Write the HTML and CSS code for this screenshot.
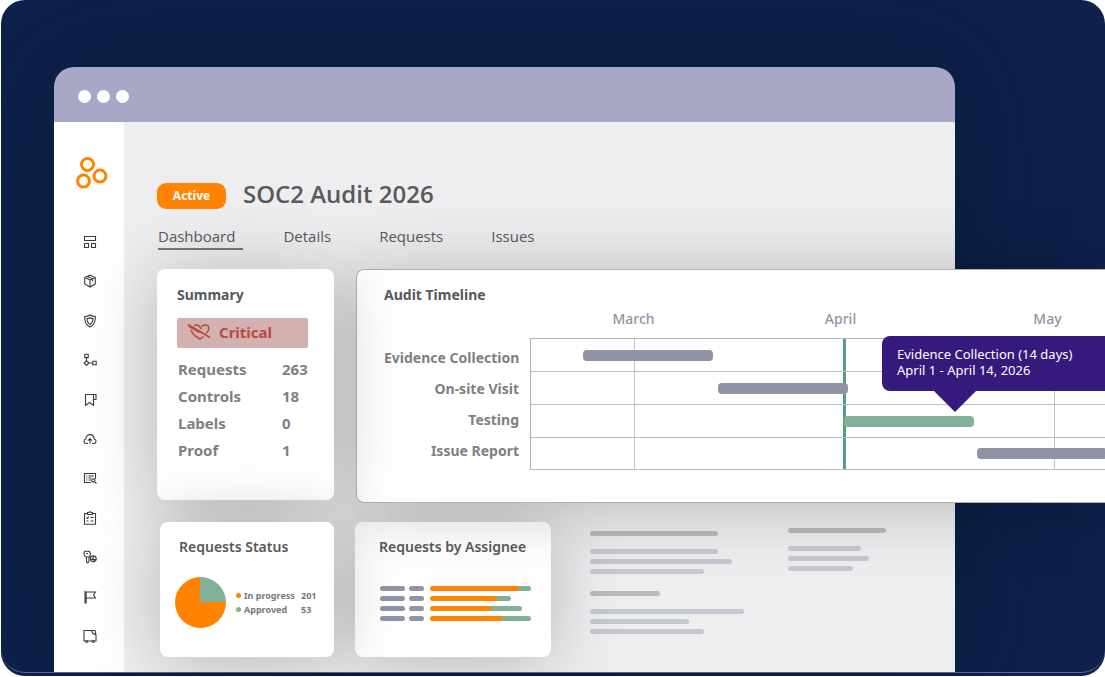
FILE: index.html
```html
<!DOCTYPE html>
<html lang="en">
<head>
    <meta charset="utf-8">
    <title>SOC2 Audit 2026</title>
    <link rel="stylesheet" href="styles.css">
</head>
<body>
    <div class="stage">
        <div class="window">
            <div class="titlebar">
                <span class="dot"></span>
                <span class="dot"></span>
                <span class="dot"></span>
            </div>

            <div class="app">
                <aside class="sidebar">
                    <svg class="logo" viewBox="0 0 32 34" aria-hidden="true">
                        <circle cx="11.5" cy="8.5" r="6"/>
                        <circle cx="24" cy="20" r="6"/>
                        <circle cx="7.5" cy="25" r="6"/>
                    </svg>
                    <nav class="menu">
                        <a href="#" aria-label="Overview"><svg viewBox="0 0 14 14"><path d="M1.5 1.5h11v4h-11zM1.5 8.5h4v4h-4zM8.500 8.500h4v4h-4z"/></svg></a>
                        <a href="#" aria-label="Packages"><svg viewBox="0 0 14 14"><path d="M7 1.200l5.300 2.300v6.500L7 13 1.700 10V3.500zM1.700 3.500L7 6l5.300-2.500M7 6v7M4.300 2.400l5.200 2.400v2.400"/></svg></a>
                        <a href="#" aria-label="Security"><svg viewBox="0 0 14 14"><path d="M7 1c1.800 1.200 3.500 1.500 5.300 1.500.3 4.800-.8 8.500-5.300 10.500C2.500 11 1.400 7.300 1.700 2.500 3.500 2.500 5.200 2.200 7 1z"/><path d="M7 3.700c1 .7 2 .9 3 .9 0 2.600-.7 4.600-3 5.800-2.300-1.200-3-3.200-3-5.800 1 0 2-.2 3-.9z"/></svg></a>
                        <a href="#" aria-label="Workflow"><svg viewBox="0 0 14 14"><path d="M1.800 1.200h3.400v3.400H1.800zM9.800 8.300h3.400v3.400H9.800zM3.500 7.600L5.900 10l-2.400 2.400L1.100 10zM3.500 4.600v3M5.900 10h3.900"/></svg></a>
                        <a href="#" aria-label="Bookmarks"><svg viewBox="0 0 14 14"><path d="M2.500 12.500v-11h8v11l-4-3zM8.500 1.500h4.500v5h-2.500"/></svg></a>
                        <a href="#" aria-label="Uploads"><svg viewBox="0 0 14 14"><path d="M5 11.500H3.300C.3 11.300.2 7.500 2.900 7 2.700 1.400 10.900.900 11.100 7c2.700.5 2.600 4.300-.4 4.500H9M7 11.500V6.800M4.900 8.700L7 6.600l2.100 2.100"/></svg></a>
                        <a href="#" aria-label="Search list"><svg viewBox="0 0 14 14"><path d="M8 11.500H1.500v-9h11V8M3.300 5h1M5.500 5H11M3.300 7h1M5.500 7h3M3.300 9h1M5.500 9H8"/><circle cx="10.300" cy="9.500" r="1.600"/><path d="M11.500 10.700l2 2"/></svg></a>
                        <a href="#" aria-label="Checklist"><svg viewBox="0 0 14 14"><path d="M4.500 2.500h-3v10.800h11V2.500h-3M4.500 1.500h1.300L7 .7l1.200.8h1.300v2h-5zM3.500 6.500l1 1 1.500-2M7.500 6.500h3M3.500 10h2M7.500 10h3"/></svg></a>
                        <a href="#" aria-label="Users and keys"><svg viewBox="0 0 14 14"><path d="M1.500 1.200h5l1 2.500-1 3.300h-4L.8 4zM3 3.500h2M3.500 7v5l1.300 1 1.200-1.500V7"/><circle cx="10.300" cy="8.800" r="2.900"/><path d="M7.500 9.500h5.700M10.300 6v2.500M9.200 8.300l2.300 2.600"/></svg></a>
                        <a href="#" aria-label="Flags"><svg viewBox="0 0 14 14"><path d="M2 .8v12.700M3.200 2.200v11.300M3 2h9.500l-2 3 2 3H3"/></svg></a>
                        <a href="#" aria-label="Vendors"><svg viewBox="0 0 14 14"><path d="M2.500 12H1V1.500h11L13 6v6h-1.500M5 12h4M8.500 1.500l1 2.500 3.500 2"/><circle cx="3.700" cy="12.300" r="1.100"/><circle cx="10.300" cy="12.300" r="1.100"/></svg></a>
                    </nav>
                </aside>

                <main class="main">
                    <header class="heading">
                        <span class="badge">Active</span>
                        <h1>SOC2 Audit 2026</h1>
                    </header>

                    <nav class="tabs">
                        <a href="#" class="active">Dashboard</a>
                        <a href="#">Details</a>
                        <a href="#">Requests</a>
                        <a href="#">Issues</a>
                    </nav>

                    <div class="row top-row">
                        <section class="card summary">
                            <h2>Summary</h2>
                            <div class="critical">
                                <svg viewBox="0 0 24 18" aria-hidden="true">
                                    <path d="M7 2.500c2.500-1.200 4.500-.5 6 1.500l1.500 2M14.500 3.500c2-2 5.500-2.200 6.700-.3 1.400 2.500.3 5-2.200 7.300M4 7c1 3.200 4.500 6.500 9 9.200l3.500-2.700M1 1.500l22 13M1.500 3.200l11 6.500"/>
                                </svg>
                                <span>Critical</span>
                            </div>
                            <table class="stats">
                                <tr><th scope="row">Requests</th><td>263</td></tr>
                                <tr><th scope="row">Controls</th><td>18</td></tr>
                                <tr><th scope="row">Labels</th><td>0</td></tr>
                                <tr><th scope="row">Proof</th><td>1</td></tr>
                            </table>
                        </section>

                        <section class="card timeline">
                            <h2>Audit Timeline</h2>
                            <div class="gantt">
                                <div class="months">
                                    <span>March</span>
                                    <span>April</span>
                                    <span>May</span>
                                </div>
                                <ul class="phases">
                                    <li>Evidence Collection</li>
                                    <li>On-site Visit</li>
                                    <li>Testing</li>
                                    <li>Issue Report</li>
                                </ul>
                                <div class="chart">
                                    <div class="track"><span class="bar" style="margin-left: 52px"></span></div>
                                    <div class="track"><span class="bar" style="margin-left: 187px"></span></div>
                                    <div class="track"><span class="bar current" style="margin-left: 313px"></span></div>
                                    <div class="track"><span class="bar" style="margin-left: 446px"></span></div>
                                    <div class="tooltip">Evidence Collection (14 days)<br>April 1 - April 14, 2026</div>
                                </div>
                            </div>
                        </section>
                    </div>

                    <div class="row bottom-row">
                        <section class="card status">
                            <h2>Requests Status</h2>
                            <div class="status-body">
                                <div class="pie"></div>
                                <table class="legend">
                                    <tr><th scope="row" class="in-progress">In progress</th><td>201</td></tr>
                                    <tr><th scope="row" class="approved">Approved</th><td>53</td></tr>
                                </table>
                            </div>
                        </section>

                        <section class="card assignee">
                            <h2>Requests by Assignee</h2>
                            <div class="people">
                                <div class="person"><i></i><i></i><b style="width: 89px"></b><b style="width: 12px"></b></div>
                                <div class="person"><i></i><i></i><b style="width: 67px"></b><b style="width: 14px"></b></div>
                                <div class="person"><i></i><i></i><b style="width: 61px"></b><b style="width: 31px"></b></div>
                                <div class="person"><i></i><i></i><b style="width: 72px"></b><b style="width: 29px"></b></div>
                            </div>
                        </section>

                        <div class="lines">
                            <span class="title" style="width: 128px"></span>
                            <span style="width: 128px"></span>
                            <span style="width: 142px"></span>
                            <span style="width: 114px"></span>
                            <span class="title" style="width: 70px"></span>
                            <span style="width: 154px"></span>
                            <span style="width: 99px"></span>
                            <span style="width: 114px"></span>
                        </div>
                        <div class="lines side">
                            <span class="title" style="width: 98px"></span>
                            <span style="width: 73px"></span>
                            <span style="width: 81px"></span>
                            <span style="width: 65px"></span>
                        </div>
                    </div>
                </main>
            </div>
        </div>
    </div>
</body>
</html>
```

FILE: styles.css
```css
* {
    box-sizing: border-box;
}
body {
    margin: 0;
    background: #fff;
    color: #58595b;
    font-family: "Noto Sans", "Open Sans", sans-serif;
}
h1, h2, ul {
    margin: 0;
    padding: 0;
}
a {
    color: inherit;
    text-decoration: none;
}
table {
    border-collapse: collapse;
}
th, td {
    padding: 0;
    text-align: left;
    font-weight: bold;
}
.stage {
    position: relative;
    margin-left: 1px;
    padding: 67px 150px 4px 53px;
    border-radius: 24px;
    overflow: hidden;
    background: #0e214a;
}
/* thin line along the lower edge */
.stage::after {
    content: "";
    position: absolute;
    inset: 0 0 3px;
    border-bottom: 1px solid #5f5f9c;
    border-radius: 24px;
    pointer-events: none;
}
.window {
    border-radius: 20px 20px 0 0;
    box-shadow: 0 0 100px rgba(4, 22, 44, .5);
}
.titlebar {
    display: flex;
    align-items: center;
    gap: 6px;
    height: 55px;
    padding: 4px 24px 0;
    border-radius: 20px 20px 0 0;
    background: #a8a8c6;
}
.dot {
    width: 13px;
    height: 13px;
    border-radius: 50%;
    background: #fff;
}
.app {
    display: flex;
    background: #eeeef0;
}

/* sidebar */
.sidebar {
    display: flex;
    flex-direction: column;
    align-items: center;
    width: 70px;
    flex: none;
    padding: 34px 0 29px;
    background: #fff;
}
.logo {
    width: 32px;
    height: 34px;
    margin-left: 6px;
    fill: none;
    stroke: #ff8200;
    stroke-width: 3;
}
.menu {
    flex: 1;
    display: flex;
    flex-direction: column;
    justify-content: space-between;
    margin-top: 45px;
    padding-left: 1px;
}
.menu a {
    height: 14px;
}
.menu svg {
    display: block;
    width: 14px;
    height: 14px;
    fill: none;
    stroke: #3c3c3e;
    stroke-width: 1.1;
}

/* page heading */
.main {
    flex: 1;
    min-width: 0;
    padding: 58px 0 15px 33px;
}
.heading {
    display: flex;
    align-items: center;
    gap: 17px;
}
.badge {
    width: 69px;
    border-radius: 9px;
    background: #ff8200;
    color: #fff;
    font-size: 12px;
    font-weight: bold;
    line-height: 26px;
    text-align: center;
}
h1 {
    padding-bottom: 4px;
    font-family: "Open Sans", "Noto Sans", sans-serif;
    font-size: 24px;
    font-weight: 600;
    line-height: 28px;
}
.tabs {
    display: flex;
    gap: 40px;
    margin-top: 13px;
    padding-left: 1px;
    font-family: "Open Sans", "Noto Sans", sans-serif;
    font-size: 15px;
    line-height: 22px;
}
.tabs a {
    padding: 0 8px 1px 0;
    border-bottom: 2px solid transparent;
}
.tabs .active {
    border-color: #77787a;
}

/* cards */
.row {
    display: flex;
    align-items: flex-start;
    margin-top: 19px;
}
.card {
    position: relative;
    border-radius: 8px;
    background: #fff;
    box-shadow: 0 4px 70px rgba(0, 0, 0, .24);
}
.card h2 {
    font-size: 14px;
    font-weight: bold;
    line-height: 20px;
}
.top-row {
    position: relative;
    z-index: 1;
    gap: 22px;
    margin-right: -150px;
}
.bottom-row {
    padding-left: 3px;
}
.bottom-row h2 {
    font-weight: 600;
}
.summary {
    z-index: 1;
    width: 177px;
    flex: none;
    padding: 16px 20px 36px;
}
.critical {
    display: flex;
    align-items: center;
    gap: 8px;
    height: 30px;
    margin-top: 13px;
    padding: 0 10px 2px;
    width: 131px;
    border-radius: 2px;
    background: #d3b1b0;
    color: #b94a40;
    font-size: 15px;
    font-weight: bold;
}
.critical svg {
    width: 24px;
    height: 18px;
    fill: none;
    stroke: currentColor;
    stroke-width: 1.5;
}
.stats {
    margin: 8px 0 0 1px;
    color: #808080;
    font-size: 15px;
    line-height: 27px;
}
.stats th {
    width: 104px;
}

/* timeline */
.timeline {
    flex: 1;
    min-width: 0;
    padding: 15px 0 32px 27px;
    border: 1px solid #b0b0b2;
    border-right: 0;
    border-radius: 8px 0 0 8px;
}
.gantt {
    display: grid;
    grid-template-columns: 135px 1fr;
    column-gap: 11px;
    margin-top: 4px;
}
.months {
    grid-column: 2;
    display: grid;
    grid-template-columns: repeat(3, 207px);
    min-width: 0;
    margin-bottom: 9px;
    overflow: hidden;
    color: #8f94a5;
    font-size: 14px;
    font-weight: 500;
    line-height: 20px;
    text-align: center;
}
.phases {
    padding-top: 4px;
    list-style: none;
    color: #808080;
    font-size: 14px;
    font-weight: bold;
    line-height: 31px;
    text-align: right;
    white-space: nowrap;
}
.chart {
    position: relative;
    min-width: 0;
    border: 1px solid #b5b5b7;
    border-width: 1px 0 0 1px;
    background:
        linear-gradient(#55a07c, #55a07c) 312px 0 / 3px 100% no-repeat,
        linear-gradient(#c4c4c4, #c4c4c4) 103px 0 / 1px 100% no-repeat,
        linear-gradient(#c4c4c4, #c4c4c4) 523px 0 / 1px 100% no-repeat;
}
.track {
    display: flex;
    align-items: center;
    height: 33px;
    border-bottom: 1px solid #bfbfc1;
    overflow: hidden;
}
.track:nth-child(4) {
    height: 32px;
}
.bar {
    flex: none;
    width: 130px;
    height: 11px;
    border-radius: 4px;
    background: #9094a4;
}
.bar.current {
    background: #81b198;
}
.tooltip {
    position: absolute;
    top: -3px;
    left: 351px;
    right: 0;
    padding: 10px 15px 13px;
    border-radius: 8px 0 0 8px;
    background: #36197c;
    color: #fff;
    font-size: 13px;
    line-height: 16px;
    white-space: nowrap;
}
.tooltip::after {
    content: "";
    position: absolute;
    top: 100%;
    left: 52px;
    border: 21px solid transparent;
    border-top-color: #36197c;
    border-bottom: 0;
}

/* requests status */
.status {
    z-index: 1;
    width: 174px;
    height: 135px;
    padding: 15px 15px 0;
}
.status h2 {
    padding-left: 4px;
}
.status-body {
    display: flex;
    align-items: center;
    gap: 10px;
    margin-top: 20px;
}
.pie {
    width: 51px;
    height: 51px;
    border-radius: 50%;
    background: conic-gradient(#81b198 25%, #ff8200 0);
}
.legend {
    color: #77787a;
    font-size: 9px;
    line-height: 14px;
}
.legend th {
    width: 65px;
}
.legend th::before {
    content: "";
    display: inline-block;
    width: 5px;
    height: 5px;
    margin-right: 3px;
    border-radius: 50%;
    vertical-align: 1px;
}
.in-progress::before {
    background: #ff8200;
}
.approved::before {
    background: #81b198;
}

/* requests by assignee */
.assignee {
    width: 196px;
    height: 135px;
    margin-left: 21px;
    padding: 15px 20px 0 24px;
}
.people {
    display: grid;
    gap: 5px;
    margin: 29px 0 0 1px;
}
.person {
    display: flex;
}
.person i,
.person b {
    height: 5px;
}
.person i {
    width: 15px;
    margin-right: 6px;
    border-radius: 3px;
    background: #9094a4;
}
.person i:first-child {
    width: 25px;
    margin-right: 4px;
}
.person b {
    border-radius: 3px 0 0 3px;
    background: #ff8200;
}
.person b:last-child {
    border-radius: 0 3px 3px 0;
    background: #81b198;
}

/* placeholder text */
.lines {
    display: flex;
    flex-direction: column;
    gap: 5px;
    width: 154px;
    margin: 9px 0 0 39px;
}
.lines.side {
    margin: 6px 0 0 44px;
}
.lines span {
    height: 5px;
    border-radius: 3px;
    background: #c5c8d1;
}
.lines .title {
    margin-bottom: 8px;
    background: #bababa;
}
.lines span + .title {
    margin-top: 12px;
}
```
